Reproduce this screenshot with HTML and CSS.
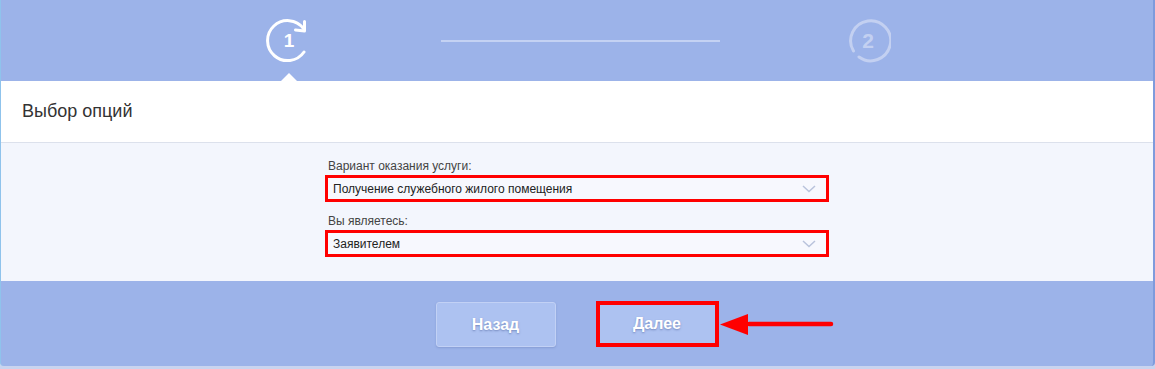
FILE: index.html
```html
<!DOCTYPE html>
<html lang="ru">

<head>
    <meta charset="UTF-8">
    <meta name="viewport" content="width=device-width, initial-scale=1.0">
    <title>Выбор опций</title>
    <link rel="stylesheet" href="styles.css">
</head>

<body>
    <div class="wizard">
        <div class="steps">
            <div class="step active">
                <svg width="46" height="46" viewBox="0 0 46 46">
                    <path d="M37.5 10.5 A20 20 0 1 0 38 34" fill="none" stroke="#fff" stroke-width="3" stroke-linecap="round"/>
                    <path d="M38.5 3.5 L38.5 13 L29.5 12" fill="none" stroke="#fff" stroke-width="3" stroke-linecap="round" stroke-linejoin="round"/>
                </svg>
                <span class="num">1</span>
                <div class="pointer"></div>
            </div>
            <div class="step-line"></div>
            <div class="step">
                <svg width="46" height="46" viewBox="0 0 46 46">
                    <path d="M14 39 A20 20 0 1 0 8.5 33" fill="none" stroke="#c3d0f1" stroke-width="3" stroke-linecap="round"/>
                </svg>
                <span class="num faded">2</span>
            </div>
        </div>

        <div class="panel-title">Выбор опций</div>

        <div class="panel-body">
            <div class="form">
                <label class="field-label">Вариант оказания услуги:</label>
                <div class="select marked">
                    <span>Получение служебного жилого помещения</span>
                    <svg class="chevron" width="14" height="8" viewBox="0 0 14 8"><path d="M1 1 L7 6.5 L13 1" fill="none" stroke="#b9c3dc" stroke-width="1.5"/></svg>
                </div>
                <label class="field-label">Вы являетесь:</label>
                <div class="select marked">
                    <span>Заявителем</span>
                    <svg class="chevron" width="14" height="8" viewBox="0 0 14 8"><path d="M1 1 L7 6.5 L13 1" fill="none" stroke="#b9c3dc" stroke-width="1.5"/></svg>
                </div>
            </div>
        </div>

        <div class="actions">
            <button class="btn">Назад</button>
            <div class="btn-mark">
                <button class="btn">Далее</button>
                <svg class="arrow" width="116" height="26" viewBox="0 0 116 26">
                    <path d="M112 11 L30 11" stroke="#ff0000" stroke-width="4.5" stroke-linecap="round"/>
                    <polygon points="1,11.5 29,1 29,22" fill="#ff0000"/>
                </svg>
            </div>
        </div>
    </div>
</body>

</html>
```

FILE: styles.css
```css
body {
    margin: 0;
    background: #c9d4ef;
    font-family: Arial, "Liberation Sans", sans-serif;
}

.wizard {
    height: 366px;
    background: #9cb3e9;
    border-left: 1px solid #8fc3ec;
    border-right: 2px solid #7f9bdc;
    border-radius: 0 0 4px 4px;
    display: flex;
    flex-direction: column;
}

.steps {
    height: 81px;
    display: flex;
    align-items: center;
    padding-left: 265px;
}

.step {
    position: relative;
    width: 46px;
    height: 46px;
    margin-top: 1px;
}

.step svg {
    display: block;
}

.step .num {
    position: absolute;
    left: 0;
    right: 0;
    top: 12px;
    text-align: center;
    color: #fff;
    font-weight: bold;
    font-size: 19px;
}

.step .num.faded {
    color: #c3d0f1;
    font-size: 21px;
    top: 11px;
}

.step .pointer {
    position: absolute;
    left: 13px;
    top: 55px;
    width: 0;
    height: 0;
    border-left: 10px solid transparent;
    border-right: 10px solid transparent;
    border-bottom: 10px solid #fff;
}

.step-line {
    width: 279px;
    height: 2px;
    background: #c4d2f3;
    margin: 0 125px 0 129px;
}

.panel-title {
    height: 62px;
    background: #fff;
    border-bottom: 1px solid #dce1ec;
    box-sizing: border-box;
    padding: 20px 0 0 21px;
    font-size: 18px;
    color: #333;
}

.panel-body {
    height: 138px;
    background: #f3f6fd;
    display: flex;
    justify-content: center;
}

.form {
    width: 504px;
    padding-top: 16px;
    display: flex;
    flex-direction: column;
}

.field-label {
    font-size: 12px;
    color: #444;
    padding-left: 3px;
    line-height: 14px;
    margin-bottom: 2px;
}

.select {
    height: 27px;
    box-sizing: border-box;
    background: #f7f8fe;
    display: flex;
    align-items: center;
    justify-content: space-between;
    padding: 0 10px 0 5px;
    font-size: 12px;
    color: #222;
    margin-bottom: 12px;
}

.select.marked {
    border: 3px solid #ff0000;
}

.actions {
    flex: 1;
    display: flex;
    justify-content: center;
    align-items: flex-start;
    padding-top: 21px;
    gap: 40px;
}

.btn {
    width: 120px;
    height: 45px;
    background: #adc2f1;
    border: 1px solid #c2d1f5;
    border-radius: 3px;
    color: #fff;
    font-family: Arial, "Liberation Sans", sans-serif;
    font-weight: bold;
    font-size: 16px;
    text-shadow: 0 1px 2px rgba(60, 80, 140, 0.5);
    box-shadow: 0 1px 2px rgba(70, 90, 150, 0.25);
}

.btn-mark {
    position: relative;
    border: 4px solid #ff0000;
    margin-top: -1px;
    display: flex;
}

.btn-mark .btn {
    width: 115px;
    height: 38px;
    border: none;
    border-radius: 0;
    box-shadow: none;
}

.arrow {
    position: absolute;
    left: 119px;
    top: 8px;
}
```
